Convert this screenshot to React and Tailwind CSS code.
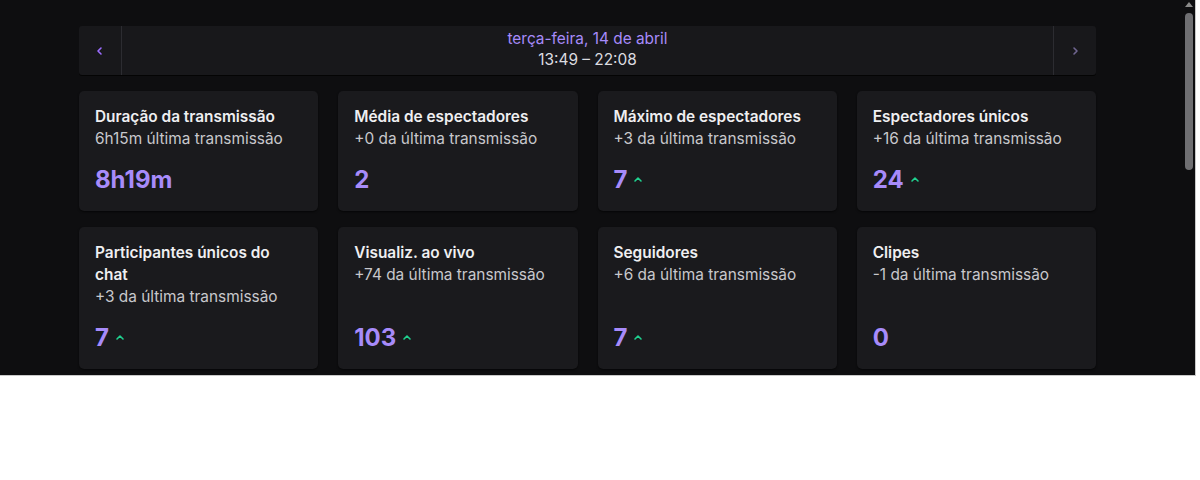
import React from 'react';

const stats = [
  { title: 'Duração da transmissão', delta: '6h15m última transmissão', value: '8h19m', up: false },
  { title: 'Média de espectadores', delta: '+0 da última transmissão', value: '2', up: false },
  { title: 'Máximo de espectadores', delta: '+3 da última transmissão', value: '7', up: true },
  { title: 'Espectadores únicos', delta: '+16 da última transmissão', value: '24', up: true },
  { title: 'Participantes únicos do chat', delta: '+3 da última transmissão', value: '7', up: true },
  { title: 'Visualiz. ao vivo', delta: '+74 da última transmissão', value: '103', up: true },
  { title: 'Seguidores', delta: '+6 da última transmissão', value: '7', up: true },
  { title: 'Clipes', delta: '-1 da última transmissão', value: '0', up: false },
];

const Caret = ({ dir = 'up', className }) => {
  const d = {
    up: 'M2 6 L5 3 L8 6',
    left: 'M6 2 L3 5 L6 8',
    right: 'M4 2 L7 5 L4 8',
  }[dir];
  return (
    <svg viewBox="0 0 10 10" className={className} fill="none" stroke="currentColor" strokeWidth="1.6" strokeLinecap="round" strokeLinejoin="round">
      <path d={d} />
    </svg>
  );
};

const StatCard = ({ stat }) => (
  <div className="bg-[#1a1a1d] rounded-[5px] shadow-[0_1px_2px_rgba(0,0,0,0.6)] px-4 pt-[15px] pb-4 flex flex-col">
    {/* title + comparison with the previous stream */}
    <h3 className="text-[15.4px] leading-[22px] font-semibold text-[#efeff1]">{stat.title}</h3>
    <p className="text-[15.4px] leading-[22px] text-[#c8c8cc]">{stat.delta}</p>
    <div className="mt-auto pt-[15px] flex items-center gap-[6px]">
      <span className="text-[24px] leading-[30px] font-bold text-[#a78bfa]">{stat.value}</span>
      {stat.up && <Caret dir="up" className="w-[10px] h-[10px] text-[#1fd18f] -mt-[1px]" />}
    </div>
  </div>
);

// fake classic scrollbar of the dashboard pane
const ScrollTrack = () => (
  <div className="w-[12px] flex flex-col items-center bg-[#0e0e10]">
    <svg viewBox="0 0 8 5" className="w-[8px] h-[5px] mt-[2px] text-[#8a8a8a]" fill="currentColor">
      <path d="M4 0 L8 5 L0 5 Z" />
    </svg>
    <div className="mt-[6px] w-[8px] h-[157px] rounded-full bg-[#6f6f72]" />
  </div>
);

export default function App() {
  return (
    <div className="w-full h-[480px] bg-white" style={{ fontFamily: 'Inter, "Noto Sans", sans-serif' }}>
      <div className="w-[1196px] h-[376px] flex border-r border-b border-[#c9c9c9]">
        <div className="w-[1183px] h-[375px] bg-[#0e0e10] overflow-hidden">
          <div className="w-[1017px] ml-[79px] pt-[26px]">
            {/* date navigator */}
            <div className="flex h-[49px] bg-[#18181b] rounded-[3px] shadow-[0_1px_0_rgba(0,0,0,0.7)]">
              <button className="w-[43px] flex items-center justify-center border-r border-[#2c2c31] text-[#9b6cff]">
                <Caret dir="left" className="w-[10px] h-[10px]" />
              </button>
              <div className="flex-1 flex flex-col items-center justify-center pb-[4px]">
                <span className="text-[15.4px] leading-[21px] text-[#a78bfa]">terça-feira, 14 de abril</span>
                <span className="text-[15.4px] leading-[21px] text-[#dcdce0]">13:49 – 22:08</span>
              </div>
              <button className="w-[43px] flex items-center justify-center border-l border-[#2c2c31] text-[#6f6590]">
                <Caret dir="right" className="w-[10px] h-[10px]" />
              </button>
            </div>

            {/* stats grid */}
            <div className="mt-4 grid grid-cols-4 gap-x-5 gap-y-4">
              {stats.map((s) => (
                <StatCard key={s.title} stat={s} />
              ))}
            </div>
          </div>
        </div>
        <ScrollTrack />
      </div>
    </div>
  );
}
